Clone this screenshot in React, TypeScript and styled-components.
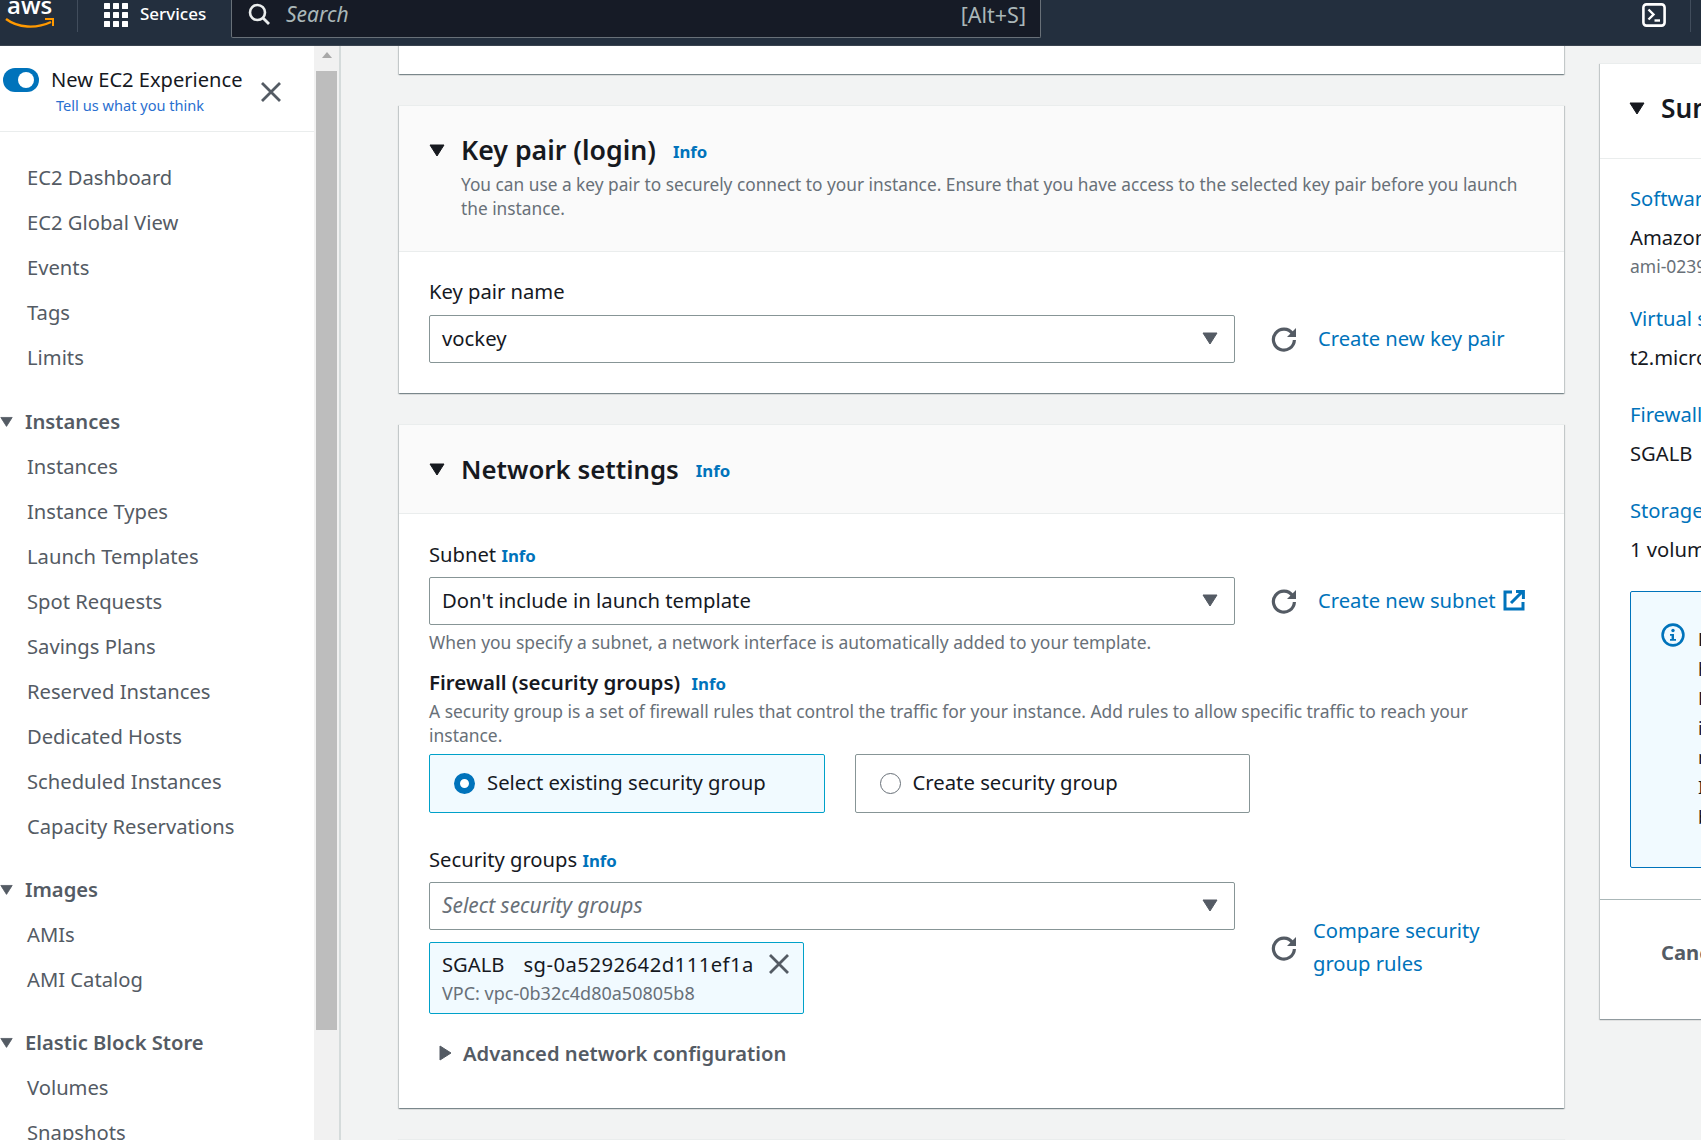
import React from 'react';
import styled, { createGlobalStyle } from 'styled-components';

const GlobalStyle = createGlobalStyle`
  html, body {
    margin: 0;
    padding: 0;
    height: 1140px;
    overflow: hidden;
    background: #f2f3f3;
    font-family: "Noto Sans", "Open Sans", sans-serif;
    color: #16191f;
  }
  * { box-sizing: border-box; }
`;

const Page = styled.div`
  width: 1701px;
  height: 1140px;
  overflow: hidden;
  display: flex;
  flex-direction: column;
`;

const TopBar = styled.header`
  height: 45px;
  flex: none;
  background: #232f3e;
  box-shadow: 0 1px 0 #39434f;
  position: relative;
  z-index: 1;
  display: flex;
  align-items: flex-start;
`;

const LogoBox = styled.div`
  width: 78px;
  height: 32px;
  border-right: 1px solid #414d5c;
  position: relative;
  overflow: hidden;
  flex: none;
`;

const LogoText = styled.span`
  position: absolute;
  left: 7px;
  top: -12px;
  font-family: "Open Sans", sans-serif;
  font-size: 24px;
  font-weight: 600;
  color: #fff;
`;

const LogoSmile = styled.svg`
  position: absolute;
  left: 5px;
  top: 17px;
`;

const ServicesButton = styled.div`
  width: 153px;
  height: 30px;
  display: flex;
  align-items: center;
  padding-left: 26px;
  gap: 12px;
  color: #fff;
  font-size: 17px;
  font-weight: 500;
  flex: none;
`;

const ServicesLabel = styled.span`
  margin-bottom: 3px;
`;

const SearchBox = styled.div`
  width: 810px;
  height: 38px;
  flex: none;
  background: #161b26;
  border: 1px solid #687078;
  border-top: none;
  border-radius: 0 0 2px 2px;
  display: flex;
  align-items: center;
  padding: 0 14px 9px 16px;
  gap: 16px;
`;

const SearchHint = styled.span`
  font-size: 21px;
  font-style: italic;
  color: #aab7b8;
  flex: 1;
`;

const SearchKey = styled.span`
  font-size: 21.5px;
  color: #aab7b8;
`;

const TopRight = styled.div`
  flex: 1;
  height: 32px;
  display: flex;
  justify-content: flex-end;
  padding: 3px 10px 0 0;
  gap: 24px;
  align-items: flex-start;
`;

const TopDivider = styled.span`
  width: 1px;
  height: 32px;
  margin-top: -3px;
  background: #414d5c;
`;

const Body = styled.div`
  flex: 1;
  min-height: 0;
  display: flex;
`;

const Sidebar = styled.aside`
  width: 314px;
  flex: none;
  background: #fff;
  overflow: hidden;
`;

const Notice = styled.div`
  height: 87px;
  border-bottom: 1px solid #eaeded;
  display: grid;
  grid-template-columns: 51px 209px 1fr;
  padding-top: 21px;
`;

const Toggle = styled.span`
  width: 36px;
  height: 24px;
  margin: 2px 0 0 3px;
  border-radius: 12px;
  background: #0073bb;
  position: relative;
  &::after {
    content: "";
    position: absolute;
    left: 15px;
    top: 4px;
    width: 16px;
    height: 16px;
    border-radius: 50%;
    background: #fff;
  }
`;

const NoticeTitle = styled.div`
  font-size: 20.1px;
  line-height: 28px;
  white-space: nowrap;
`;

const NoticeLink = styled.div`
  font-size: 14.6px;
  line-height: 20px;
  color: #2a6fd0;
  margin: 1px 0 0 5px;
  white-space: nowrap;
`;

const NoticeClose = styled.div`
  padding: 15px 0 0 0;
`;

const NavList = styled.nav`
  padding-top: 23px;
  display: flex;
  flex-direction: column;
`;

const NavItem = styled.a`
  height: 45px;
  line-height: 45px;
  padding-left: 27px;
  font-size: 20.2px;
  color: #545b64;
  white-space: nowrap;
  flex: none;
`;

const NavGroup = styled.div`
  height: 46px;
  flex: none;
  margin-top: 18px;
  display: flex;
  align-items: center;
  gap: 12px;
  font-size: 20.2px;
  font-weight: 600;
  color: #545b64;
  white-space: nowrap;
  & ~ & {
    margin-top: 17px;
  }
`;

const ScrollTrack = styled.div`
  width: 27px;
  flex: none;
  background: #f1f1f1;
  border-right: 2px solid #d5dbdb;
  padding: 7px 0 0 2px;
  display: flex;
  flex-direction: column;
  align-items: stretch;
  overflow: hidden;
`;

const ScrollArrow = styled.span`
  align-self: center;
  width: 0;
  height: 0;
  margin: 0 2px 13px 0;
  border-left: 5px solid transparent;
  border-right: 5px solid transparent;
  border-bottom: 6px solid #a8a8a8;
  flex: none;
`;

const ScrollThumb = styled.span`
  height: 959px;
  width: 21px;
  background: #bdbdbd;
  flex: none;
`;

const Main = styled.main`
  flex: 1;
  min-width: 0;
  overflow: hidden;
  display: flex;
  padding-left: 58px;
  gap: 36px;
`;

const Column = styled.div`
  width: 1165px;
  flex: none;
  display: flex;
  flex-direction: column;
  gap: 31px;
`;

const Card = styled.section<{ $height: number }>`
  height: ${(p) => p.$height}px;
  flex: none;
  background: #fff;
  border-top: 1px solid #eaeded;
  box-shadow: 0 1px 1px 0 rgba(0, 28, 36, 0.3), 1px 1px 1px 0 rgba(0, 28, 36, 0.15),
    -1px 1px 1px 0 rgba(0, 28, 36, 0.15);
`;

const CardHead = styled.div<{ $height: number }>`
  height: ${(p) => p.$height}px;
  background: #fafafa;
  border-bottom: 1px solid #eaeded;
  padding: 26px 30px 0;
`;

const CardTitleRow = styled.div`
  display: flex;
  align-items: center;
  height: 36px;
`;

const CardTitle = styled.h2<{ $size?: number }>`
  margin: 0 17px 0 16px;
  font-size: ${(p) => p.$size ?? 26.3}px;
  font-weight: 600;
  line-height: 36px;
  white-space: nowrap;
`;

const InfoLink = styled.a<{ $gap?: number }>`
  font-size: 16.8px;
  font-weight: 700;
  color: #0073bb;
  margin-left: ${(p) => p.$gap ?? 0}px;
`;

const TitleInfo = styled(InfoLink)`
  margin-top: 3px;
`;

const CardDesc = styled.p`
  margin: 5px 0 0 32px;
  font-size: 17.3px;
  line-height: 24px;
  color: #687078;
`;

const CardBody = styled.div`
  padding: 0 30px;
`;

const FieldRow = styled.div<{ $top?: number }>`
  display: flex;
  align-items: center;
  margin-top: ${(p) => p.$top ?? 0}px;
`;

const Label = styled.div<{ $top: number }>`
  margin-top: ${(p) => p.$top}px;
  font-size: 20.2px;
  line-height: 28px;
  height: 28px;
  white-space: nowrap;
`;

const SelectBox = styled.div`
  width: 806px;
  height: 48px;
  flex: none;
  margin-top: 9px;
  border: 1px solid #879596;
  border-radius: 2px;
  background: #fff;
  display: flex;
  align-items: center;
  justify-content: space-between;
  padding: 0 16px 2px 12px;
  font-size: 20.3px;
`;

const Placeholder = styled.span`
  font-size: 20.9px;
  font-style: italic;
  color: #687078;
`;

const SideAction = styled.div<{ $gap: number }>`
  display: flex;
  align-items: center;
  gap: ${(p) => p.$gap}px;
  margin: 9px 0 0 36px;
`;

const BlueLink = styled.a`
  font-size: 20.2px;
  color: #0073bb;
  white-space: nowrap;
  display: inline-flex;
  align-items: center;
  gap: 7px;
  padding-bottom: 2px;
`;

const CompareText = styled.div`
  margin-bottom: 3px;
`;

const CompareLink = styled.a`
  font-size: 20.2px;
  line-height: 32.5px;
  color: #0073bb;
  display: block;
  white-space: nowrap;
`;

const Hint = styled.div<{ $top: number }>`
  margin-top: ${(p) => p.$top}px;
  font-size: 17.45px;
  line-height: 24px;
  color: #687078;
`;

const FirewallTitle = styled.div`
  margin-top: 14px;
  font-size: 20.5px;
  font-weight: 600;
  line-height: 28px;
  white-space: nowrap;
`;

const RadioRow = styled.div`
  display: flex;
  gap: 30px;
  margin-top: 7px;
`;

const RadioCard = styled.div<{ $checked?: boolean }>`
  width: 395.5px;
  height: 59px;
  border: 1px solid ${(p) => (p.$checked ? '#00a1c9' : '#879596')};
  border-radius: 2px;
  background: ${(p) => (p.$checked ? '#f1faff' : '#fff')};
  display: flex;
  align-items: center;
  gap: 12px;
  padding-left: 24px;
  font-size: 20.3px;
`;

const RadioLabel = styled.span`
  margin-bottom: 3px;
`;

const RadioDot = styled.span<{ $checked?: boolean }>`
  width: 21px;
  height: 21px;
  border-radius: 50%;
  flex: none;
  background: #fff;
  border: ${(p) => (p.$checked ? '6px solid #0073bb' : '1px solid #687078')};
`;

const TokenRow = styled.div`
  display: flex;
  align-items: flex-start;
`;

const TokenColumn = styled.div`
  width: 806px;
  flex: none;
`;

const Token = styled.div`
  width: 375px;
  height: 72px;
  margin-top: 12px;
  border: 1px solid #00a1c9;
  border-radius: 2px;
  background: #f1faff;
  padding: 7px 0 0 12px;
`;

const TokenTop = styled.div`
  display: flex;
  align-items: center;
  font-size: 20.2px;
  line-height: 28px;
  white-space: nowrap;
`;

const TokenId = styled.span`
  margin-left: 19px;
  margin-right: 14px;
  letter-spacing: 0.5px;
`;

const TokenVpc = styled.div`
  font-size: 18px;
  line-height: 24px;
  margin-top: 3px;
  color: #687078;
  white-space: nowrap;
`;

const TokenAction = styled.div`
  display: flex;
  align-items: center;
  gap: 16px;
  margin-left: 36px;
  height: 36px;
`;

const Advanced = styled.div`
  margin: 25px 0 0 8px;
  display: flex;
  align-items: center;
  gap: 10px;
  font-size: 20.2px;
  font-weight: 600;
  line-height: 28px;
  color: #545b64;
`;

const SummaryColumn = styled.div`
  width: 200px;
  flex: none;
  padding-top: 18px;
`;

const SummaryCard = styled.section`
  height: 956px;
  background: #fff;
  border-top: 1px solid #eaeded;
  box-shadow: 0 1px 1px 0 rgba(0, 28, 36, 0.3), -1px 1px 1px 0 rgba(0, 28, 36, 0.15);
  white-space: nowrap;
`;

const SummaryHead = styled.div`
  height: 95px;
  border-bottom: 1px solid #eaeded;
  padding: 26px 0 0 29px;
`;

const SummaryBody = styled.div`
  height: 741px;
  padding: 25px 0 0 30px;
  border-bottom: 1px solid #aab7b8;
`;

const SummaryLink = styled.div<{ $top?: number }>`
  margin-top: ${(p) => p.$top ?? 0}px;
  font-size: 20.2px;
  line-height: 28px;
  color: #0073bb;
`;

const SummaryValue = styled.div<{ $top?: number }>`
  margin-top: ${(p) => p.$top ?? 10.5}px;
  font-size: 20.2px;
  line-height: 28px;
`;

const SummarySub = styled.div`
  margin-top: 2px;
  font-size: 17.5px;
  line-height: 26px;
  color: #687078;
`;

const FreeTier = styled.div`
  width: 400px;
  height: 277px;
  margin-top: 28px;
  border: 1px solid #0073bb;
  border-radius: 2px;
  background: #f1faff;
  display: flex;
  padding: 31px 0 0 30px;
  gap: 13px;
`;

const FreeTierText = styled.div`
  font-size: 18px;
  line-height: 29.6px;
  margin-top: 2px;
`;

const FreeTierLine = styled.div<{ $bold?: boolean }>`
  font-weight: ${(p) => (p.$bold ? 700 : 400)};
`;

const SummaryFoot = styled.div`
  padding: 38px 0 0 61px;
  font-size: 20.2px;
  font-weight: 700;
  color: #545b64;
`;

const Caret = ({ size = 16, color = '#16191f' }: { size?: number; color?: string }) => (
  <svg width={size} height={size} viewBox="0 0 16 16" style={{ flex: 'none' }}>
    <path d="M1 3h14L8 14z" fill={color} stroke={color} strokeLinejoin="round" />
  </svg>
);

const CaretRight = () => (
  <svg width="16" height="16" viewBox="0 0 16 16">
    <path d="M3 1l11 7-11 7z" fill="#545b64" stroke="#545b64" strokeLinejoin="round" />
  </svg>
);

const Refresh = () => (
  <svg width="26" height="26" viewBox="0 0 26 26" fill="none" style={{ flex: 'none' }}>
    <path d="M21.5 7.5A10.5 10.5 0 1 0 23.4 14" stroke="#545b64" strokeWidth="3.2" />
    <path d="M25 2v9h-9z" fill="#545b64" />
  </svg>
);

const Cross = () => (
  <svg width="22" height="22" viewBox="0 0 22 22" style={{ flex: 'none' }}>
    <path d="M2 2l18 18M20 2L2 20" stroke="#545b64" strokeWidth="2.8" />
  </svg>
);

const External = () => (
  <svg width="22" height="21" viewBox="0 0 22 21" fill="none">
    <path d="M9 2H2v17h18v-7" stroke="#0073bb" strokeWidth="3" />
    <path d="M8 13L19 2M13 1.6h7.4V9" stroke="#0073bb" strokeWidth="3" />
  </svg>
);

const InfoCircle = () => (
  <svg width="24" height="24" viewBox="0 0 24 24" fill="none" style={{ flex: 'none' }}>
    <circle cx="12" cy="12" r="10.4" stroke="#0073bb" strokeWidth="2.6" />
    <circle cx="12" cy="7.5" r="1.7" fill="#0073bb" />
    <path d="M9 11h4v5h2v1.8H9V16h1.6v-3.2H9z" fill="#0073bb" />
  </svg>
);

const GridIcon = () => (
  <svg width="24" height="24" viewBox="0 0 24 24" fill="#fff" style={{ flex: 'none' }}>
    {[0, 9, 18].map((y) =>
      [0, 9, 18].map((x) => <rect key={`${x}-${y}`} x={x} y={y} width="6" height="6" rx="0.5" />)
    )}
  </svg>
);

const SearchIcon = () => (
  <svg width="22" height="22" viewBox="0 0 22 22" fill="none" style={{ flex: 'none' }}>
    <circle cx="9.5" cy="9.5" r="7.5" stroke="#eaeded" strokeWidth="2.6" />
    <path d="M15 15l6 6" stroke="#eaeded" strokeWidth="2.8" />
  </svg>
);

const ShellIcon = () => (
  <svg width="24" height="24" viewBox="0 0 24 24" fill="none" style={{ flex: 'none' }}>
    <rect x="1.4" y="1.4" width="21.2" height="21.2" rx="3" stroke="#fff" strokeWidth="2.6" />
    <path d="M6.5 6.5l5 5-5 5" stroke="#fff" strokeWidth="2.4" />
    <path d="M12.5 17.5h5.5" stroke="#fff" strokeWidth="2.4" />
  </svg>
);

const firstNav = ['EC2 Dashboard', 'EC2 Global View', 'Events', 'Tags', 'Limits'];
const instanceNav = [
  'Instances',
  'Instance Types',
  'Launch Templates',
  'Spot Requests',
  'Savings Plans',
  'Reserved Instances',
  'Dedicated Hosts',
  'Scheduled Instances',
  'Capacity Reservations',
];
const imageNav = ['AMIs', 'AMI Catalog'];
const storeNav = ['Volumes', 'Snapshots'];

const freeTierLines = [
  'hours of t2.micro (or t3.micro in the',
  'Regions in which t2.micro is unavailable)',
  'instance usage on free tier AMIs per',
  'month, 30 GiB of EBS storage, 2 million',
  'IOs, 1 GB of snapshots, and 100 GB of',
  'bandwidth to the internet.',
];

function NavSection({ title, items }: { title: string; items: string[] }) {
  return (
    <>
      <NavGroup>
        <Caret size={13} color="#545b64" />
        {title}
      </NavGroup>
      {items.map((item) => (
        <NavItem key={item}>{item}</NavItem>
      ))}
    </>
  );
}

export default function App() {
  return (
    <Page>
      <GlobalStyle />
      <TopBar>
        <LogoBox>
          <LogoText>aws</LogoText>
          <LogoSmile width="50" height="14" viewBox="0 0 50 14" fill="none">
            <path d="M1 2c12 9 30 10 45 3" stroke="#ff9900" strokeWidth="2.4" />
            <path d="M40 2h8v7" stroke="#ff9900" strokeWidth="2" />
          </LogoSmile>
        </LogoBox>
        <ServicesButton>
          <GridIcon />
          <ServicesLabel>Services</ServicesLabel>
        </ServicesButton>
        <SearchBox>
          <SearchIcon />
          <SearchHint>Search</SearchHint>
          <SearchKey>[Alt+S]</SearchKey>
        </SearchBox>
        <TopRight>
          <ShellIcon />
          <TopDivider />
        </TopRight>
      </TopBar>
      <Body>
        <Sidebar>
          <Notice>
            <Toggle />
            <div>
              <NoticeTitle>New EC2 Experience</NoticeTitle>
              <NoticeLink>Tell us what you think</NoticeLink>
            </div>
            <NoticeClose>
              <Cross />
            </NoticeClose>
          </Notice>
          <NavList>
            {firstNav.map((item) => (
              <NavItem key={item}>{item}</NavItem>
            ))}
            <NavSection title="Instances" items={instanceNav} />
            <NavSection title="Images" items={imageNav} />
            <NavSection title="Elastic Block Store" items={storeNav} />
          </NavList>
        </Sidebar>
        <ScrollTrack>
          <ScrollArrow />
          <ScrollThumb />
        </ScrollTrack>
        <Main>
          <Column>
            <Card $height={29} />
            <Card $height={288}>
              <CardHead $height={146}>
                <CardTitleRow>
                  <Caret />
                  <CardTitle $size={26.7}>Key pair (login)</CardTitle>
                  <TitleInfo>Info</TitleInfo>
                </CardTitleRow>
                <CardDesc>
                  You can use a key pair to securely connect to your instance. Ensure that you have
                  access to the selected key pair before you launch the instance.
                </CardDesc>
              </CardHead>
              <CardBody>
                <Label $top={25}>Key pair name</Label>
                <FieldRow $top={1}>
                  <SelectBox>
                    vockey
                    <Caret size={16} color="#545b64" />
                  </SelectBox>
                  <SideAction $gap={21}>
                    <Refresh />
                    <BlueLink>Create new key pair</BlueLink>
                  </SideAction>
                </FieldRow>
              </CardBody>
            </Card>
            <Card $height={684}>
              <CardHead $height={89}>
                <CardTitleRow>
                  <Caret />
                  <CardTitle $size={25.8}>Network settings</CardTitle>
                  <TitleInfo>Info</TitleInfo>
                </CardTitleRow>
              </CardHead>
              <CardBody>
                <Label $top={26}>
                  Subnet <InfoLink>Info</InfoLink>
                </Label>
                <FieldRow>
                  <SelectBox>
                    Don't include in launch template
                    <Caret size={16} color="#545b64" />
                  </SelectBox>
                  <SideAction $gap={21}>
                    <Refresh />
                    <BlueLink>
                      Create new subnet
                      <External />
                    </BlueLink>
                  </SideAction>
                </FieldRow>
                <Hint $top={5}>
                  When you specify a subnet, a network interface is automatically added to your template.
                </Hint>
                <FirewallTitle>
                  Firewall (security groups) <InfoLink $gap={6}>Info</InfoLink>
                </FirewallTitle>
                <Hint $top={1}>
                  A security group is a set of firewall rules that control the traffic for your instance. Add rules to
                  allow specific traffic to reach your instance.
                </Hint>
                <RadioRow>
                  <RadioCard $checked>
                    <RadioDot $checked />
                    <RadioLabel>Select existing security group</RadioLabel>
                  </RadioCard>
                  <RadioCard>
                    <RadioDot />
                    <RadioLabel>Create security group</RadioLabel>
                  </RadioCard>
                </RadioRow>
                <Label $top={32}>
                  Security groups <InfoLink>Info</InfoLink>
                </Label>
                <SelectBox>
                  <Placeholder>Select security groups</Placeholder>
                  <Caret size={16} color="#545b64" />
                </SelectBox>
                <TokenRow>
                  <TokenColumn>
                    <Token>
                      <TokenTop>
                        SGALB
                        <TokenId>sg-0a5292642d111ef1a</TokenId>
                        <Cross />
                      </TokenTop>
                      <TokenVpc>VPC: vpc-0b32c4d80a50805b8</TokenVpc>
                    </Token>
                  </TokenColumn>
                  <TokenAction>
                    <Refresh />
                    <CompareText>
                      <CompareLink>Compare security</CompareLink>
                      <CompareLink>group rules</CompareLink>
                    </CompareText>
                  </TokenAction>
                </TokenRow>
                <Advanced>
                  <CaretRight />
                  Advanced network configuration
                </Advanced>
              </CardBody>
            </Card>
            <Card $height={100} />
          </Column>
          <SummaryColumn>
            <SummaryCard>
              <SummaryHead>
                <CardTitleRow>
                  <Caret />
                  <CardTitle>Summary</CardTitle>
                </CardTitleRow>
              </SummaryHead>
              <SummaryBody>
                <SummaryLink>Software Image (AMI)</SummaryLink>
                <SummaryValue>Amazon Linux 2 Kernel 5.10 AMI</SummaryValue>
                <SummarySub>ami-0239...</SummarySub>
                <SummaryLink $top={25}>Virtual server type (instance type)</SummaryLink>
                <SummaryValue $top={11.5}>t2.micro</SummaryValue>
                <SummaryLink $top={29}>Firewall (security group)</SummaryLink>
                <SummaryValue>SGALB</SummaryValue>
                <SummaryLink $top={29}>Storage (volumes)</SummaryLink>
                <SummaryValue $top={11.5}>1 volume(s) - 8 GiB</SummaryValue>
                <FreeTier>
                  <InfoCircle />
                  <FreeTierText>
                    <FreeTierLine $bold>Free tier: In your first year</FreeTierLine>
                    {freeTierLines.map((line) => (
                      <FreeTierLine key={line}>{line}</FreeTierLine>
                    ))}
                  </FreeTierText>
                </FreeTier>
              </SummaryBody>
              <SummaryFoot>Cancel</SummaryFoot>
            </SummaryCard>
          </SummaryColumn>
        </Main>
      </Body>
    </Page>
  );
}
